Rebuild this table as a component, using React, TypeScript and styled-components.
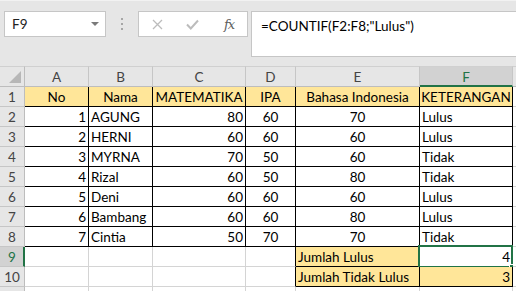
import React from 'react';
import styled, { createGlobalStyle } from 'styled-components';

const GREEN = '#217346';
const GRID = '#d4d4d4';
const INK = '#000';
const GOLD = '#ffe699';

const GlobalStyle = createGlobalStyle`
  html, body { margin: 0; padding: 0; background: #fff; }
  body { font-family: Lato, "Open Sans", "Liberation Sans", sans-serif; }
  * { box-sizing: border-box; }
`;

const Window = styled.div`
  width: 516px;
  height: 291px;
  overflow: hidden;
  display: flex;
  flex-direction: column;
  background: #e6e6e6;
`;

/* ---------- formula bar ---------- */

const FormulaBar = styled.div`
  height: 66px;
  flex: none;
  display: flex;
  align-items: flex-start;
  padding: 11px 0 0 4px;
  background: #e6e6e6;
  box-shadow: inset 0 1px 0 #f2f2f2;
`;

const NameBox = styled.div`
  width: 102px;
  height: 26px;
  display: flex;
  align-items: center;
  justify-content: space-between;
  padding: 0 6px 0 7px;
  background: #fff;
  border: 1px solid #c6c6c6;
  font-size: 13.5px;
  color: #222;
`;

const Caret = styled.span`
  width: 0;
  height: 0;
  border-left: 4px solid transparent;
  border-right: 4px solid transparent;
  border-top: 4px solid #7a7a7a;
`;

const Grip = styled.div`
  width: 32px;
  height: 26px;
  display: flex;
  flex-direction: column;
  align-items: center;
  justify-content: center;
  gap: 3px;
`;

const GripDot = styled.span`
  width: 2px;
  height: 2px;
  background: #a6a6a6;
`;

const FxButtons = styled.div`
  width: 110px;
  height: 26px;
  display: flex;
  align-items: center;
  padding-left: 13px;
  gap: 23px;
  background: #fff;
  border: 1px solid #c6c6c6;
`;

const FxLabel = styled.span`
  font-family: "DejaVu Serif", "Liberation Serif", serif;
  font-style: italic;
  font-size: 13px;
  color: #5e5e5e;
  margin-left: 2px;
  letter-spacing: -1px;
`;

const FormulaInput = styled.div`
  flex: 1;
  height: 46px;
  margin-left: 3px;
  padding: 6px 0 0 9px;
  background: #fff;
  border: 1px solid #c6c6c6;
  border-right: none;
  font-size: 13.5px;
  color: ${INK};
`;

/* ---------- sheet ---------- */

const Sheet = styled.div`
  flex: 1;
  display: grid;
  grid-template-columns: 25px 64px 64px 93px 50px 124px 93px 1fr;
  grid-template-rows: 21px;
  grid-auto-rows: 20px;
  background: #fff;
  font-size: 13.5px;
`;

const Corner = styled.div`
  position: relative;
  background: #e6e6e6;
  border-right: 1px solid #bdbdbd;
  border-bottom: 1px solid #bdbdbd;
  border-top: 1px solid #d0d0d0;
  &::after {
    content: '';
    position: absolute;
    right: 3px;
    bottom: 3px;
    border-left: 12px solid transparent;
    border-bottom: 12px solid #b7b7b7;
  }
`;

const ColHead = styled.div<{ $active?: boolean }>`
  display: flex;
  align-items: center;
  justify-content: center;
  background: ${(p) => (p.$active ? '#d2d2d2' : '#e6e6e6')};
  color: ${(p) => (p.$active ? GREEN : '#444')};
  border-top: 1px solid #d0d0d0;
  border-right: 1px solid #c6c6c6;
  border-bottom: ${(p) => (p.$active ? `2px solid ${GREEN}` : '1px solid #bdbdbd')};
  padding-top: 1px;
`;

const RowHead = styled.div<{ $active?: boolean }>`
  display: flex;
  align-items: center;
  justify-content: center;
  background: ${(p) => (p.$active ? '#d2d2d2' : '#e6e6e6')};
  color: ${(p) => (p.$active ? GREEN : '#444')};
  border-bottom: 1px solid #c6c6c6;
  border-right: ${(p) => (p.$active ? `2px solid ${GREEN}` : '1px solid #bdbdbd')};
  padding: 1px 0 0 ${(p) => (p.$active ? '1px' : '0')};
`;

type Align = 'left' | 'center' | 'right';

const Cell = styled.div<{ $align?: Align; $fill?: string; $right?: string; $bottom?: string }>`
  position: relative;
  display: flex;
  align-items: center;
  justify-content: ${(p) =>
    p.$align === 'right' ? 'flex-end' : p.$align === 'center' ? 'center' : 'flex-start'};
  padding: 1px 2px 0 2px;
  white-space: nowrap;
  color: ${INK};
  background: ${(p) => p.$fill ?? '#fff'};
  border-right: 1px solid ${(p) => p.$right ?? GRID};
  border-bottom: 1px solid ${(p) => p.$bottom ?? GRID};
`;

const Selection = styled.div`
  position: absolute;
  left: -2px;
  right: -1px;
  top: -2px;
  bottom: -2px;
  border: 2px solid ${GREEN};
  pointer-events: none;
`;

const FillHandle = styled.span`
  position: absolute;
  right: -4px;
  bottom: -4px;
  width: 6px;
  height: 6px;
  background: ${GREEN};
  border-left: 1px solid #fff;
  border-top: 1px solid #fff;
`;

type Student = { no: number; name: string; mtk: number; ipa: number; bi: number; ket: string };

const students: Student[] = [
  { no: 1, name: 'AGUNG', mtk: 80, ipa: 60, bi: 70, ket: 'Lulus' },
  { no: 2, name: 'HERNI', mtk: 60, ipa: 60, bi: 60, ket: 'Lulus' },
  { no: 3, name: 'MYRNA', mtk: 70, ipa: 50, bi: 60, ket: 'Tidak' },
  { no: 4, name: 'Rizal', mtk: 60, ipa: 50, bi: 80, ket: 'Tidak' },
  { no: 5, name: 'Deni', mtk: 60, ipa: 60, bi: 60, ket: 'Lulus' },
  { no: 6, name: 'Bambang', mtk: 60, ipa: 60, bi: 80, ket: 'Lulus' },
  { no: 7, name: 'Cintia', mtk: 50, ipa: 70, bi: 70, ket: 'Tidak' },
];

const columns = ['A', 'B', 'C', 'D', 'E', 'F', ''];
const headings = ['No', 'Nama', 'MATEMATIKA', 'IPA', 'Bahasa Indonesia', 'KETERANGAN'];

function CloseIcon() {
  return (
    <svg width="11" height="11" viewBox="0 0 11 11">
      <path d="M1 1 L10 10 M10 1 L1 10" stroke="#bcbcbc" strokeWidth="1.3" fill="none" />
    </svg>
  );
}

function CheckIcon() {
  return (
    <svg width="13" height="11" viewBox="0 0 13 11">
      <path d="M1 5.5 L4.8 9.5 L12 1.5" stroke="#bcbcbc" strokeWidth="2" fill="none" />
    </svg>
  );
}

export default function App() {
  return (
    <Window>
      <GlobalStyle />
      <FormulaBar>
        <NameBox>
          <span>F9</span>
          <Caret />
        </NameBox>
        <Grip>
          <GripDot />
          <GripDot />
          <GripDot />
        </Grip>
        <FxButtons>
          <CloseIcon />
          <CheckIcon />
          <FxLabel>fx</FxLabel>
        </FxButtons>
        <FormulaInput>=COUNTIF(F2:F8;"Lulus")</FormulaInput>
      </FormulaBar>

      <Sheet>
        <Corner />
        {columns.map((c, i) => (
          <ColHead key={i} $active={c === 'F'}>
            {c}
          </ColHead>
        ))}

        <RowHead>1</RowHead>
        {headings.map((h) => (
          <Cell key={h} $align="center" $fill={GOLD} $right={INK} $bottom={INK}>
            {h}
          </Cell>
        ))}
        <Cell />

        {students.map((s, i) => (
          <React.Fragment key={s.no}>
            <RowHead>{i + 2}</RowHead>
            <Cell $align="right" $right={INK} $bottom={INK}>{s.no}</Cell>
            <Cell $right={INK} $bottom={INK}>{s.name}</Cell>
            <Cell $align="right" $right={INK} $bottom={INK}>{s.mtk}</Cell>
            <Cell $align="center" $right={INK} $bottom={INK}>{s.ipa}</Cell>
            <Cell $align="center" $right={INK} $bottom={INK}>{s.bi}</Cell>
            <Cell $right={INK} $bottom={INK}>{s.ket}</Cell>
            <Cell />
          </React.Fragment>
        ))}

        <RowHead $active>9</RowHead>
        <Cell />
        <Cell />
        <Cell />
        <Cell $right={INK} />
        <Cell $fill={GOLD} $right={INK} $bottom={INK}>Jumlah Lulus</Cell>
        <Cell $align="right" $right={INK} $bottom={INK}>
          4
          <Selection>
            <FillHandle />
          </Selection>
        </Cell>
        <Cell />

        <RowHead>10</RowHead>
        <Cell />
        <Cell />
        <Cell />
        <Cell $right={INK} />
        <Cell $fill={GOLD} $right={INK} $bottom={INK}>Jumlah Tidak Lulus</Cell>
        <Cell $align="right" $fill={GOLD} $right={INK} $bottom={INK}>3</Cell>
        <Cell />

        {/* row 11 peeks in at the bottom edge */}
        <RowHead />
        {columns.map((_, i) => (
          <Cell key={i} />
        ))}
      </Sheet>
    </Window>
  );
}
